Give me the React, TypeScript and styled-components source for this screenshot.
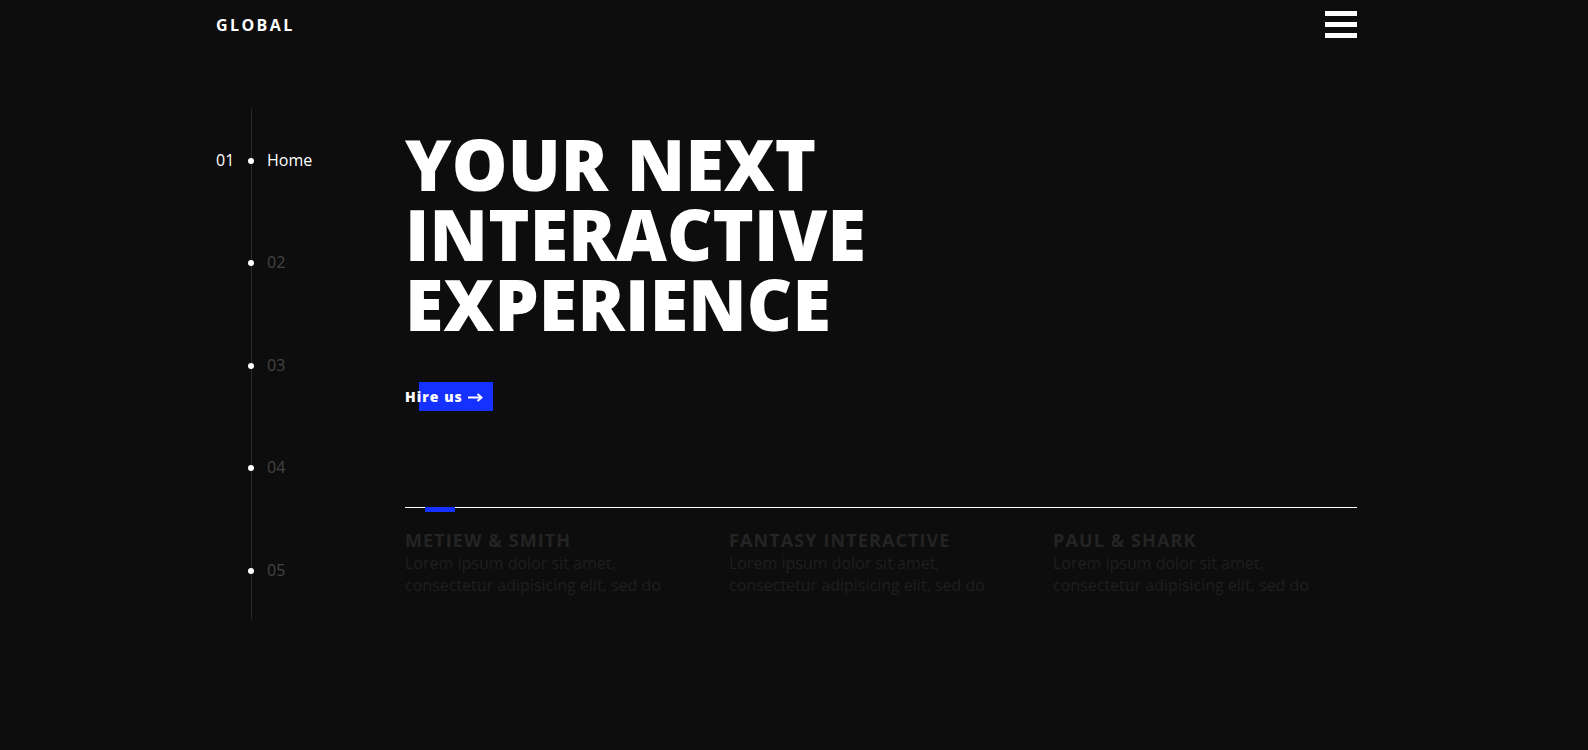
import React from "react";
import styled, { createGlobalStyle } from "styled-components";

const GlobalStyle = createGlobalStyle`
  html, body { margin: 0; padding: 0; background: #0d0d0d; }
  body { font-family: "Open Sans", "Liberation Sans", sans-serif; color: #fff; min-height: 750px; }
  * { box-sizing: border-box; }
`;

const Container = styled.div`
  width: 1141px;
  margin-left: 216px;
`;

const Header = styled.header`
  height: 49px;
  display: flex;
  align-items: center;
  justify-content: space-between;
`;

const Logo = styled.div`
  font-size: 16px;
  font-weight: 700;
  letter-spacing: 2.4px;
  line-height: 1;
  padding-top: 1px;
`;

const Burger = styled.button`
  width: 32px;
  padding: 0;
  border: 0;
  background: none;
  display: flex;
  flex-direction: column;
  gap: 6px;
  cursor: pointer;
`;

const Bar = styled.span`
  display: block;
  height: 5px;
  background: #fff;
`;

const Main = styled.main`
  display: flex;
  padding-top: 60px;
`;

const SideNav = styled.nav`
  width: 189px;
  flex: none;
  height: 510px;
  padding-top: 39px;
  display: flex;
  flex-direction: column;
  gap: 78.4px;
  background: linear-gradient(#2a2a2a, #2a2a2a) no-repeat 35px 0 / 1px 100%;
`;

const NavItem = styled.div`
  height: 24px;
  display: grid;
  grid-template-columns: 32px 6px 1fr;
  align-items: center;
  font-size: 16px;
  line-height: 24px;
`;

const Index = styled.span`
  color: #fff;
`;

const Dot = styled.span`
  width: 6px;
  height: 6px;
  margin-top: 2px;
  border-radius: 50%;
  background: #fff;
`;

const Label = styled.span<{ $active?: boolean }>`
  margin-left: 13px;
  color: ${(p) => (p.$active ? "#fff" : "#444")};
`;

const Content = styled.section`
  flex: 1;
  padding-top: 20px;
`;

const Title = styled.h1`
  margin: 0;
  font-size: 70px;
  line-height: 70px;
  font-weight: 800;
  letter-spacing: 0.2px;
  color: #fff;
`;

const HireButton = styled.a`
  position: relative;
  display: inline-flex;
  align-items: center;
  gap: 5px;
  margin-top: 43px;
  height: 29px;
  padding-right: 10px;
  font-size: 14px;
  font-weight: 800;
  letter-spacing: 1px;
  color: #fff;
  text-decoration: none;
  isolation: isolate;
  &::before {
    content: "";
    position: absolute;
    left: 14px;
    right: 0;
    top: 0;
    bottom: 0;
    background: #1431ff;
    z-index: -1;
  }
`;

const Arrow = styled.svg`
  width: 15px;
  height: 9px;
  margin-top: 1px;
`;

const Track = styled.div`
  margin-top: 96px;
  height: 5px;
  background: linear-gradient(#fff, #fff) no-repeat 0 0 / 100% 1px;
`;

const Indicator = styled.div`
  width: 30px;
  height: 5px;
  margin-left: 20px;
  background: #1431ff;
`;

const Clients = styled.div`
  display: grid;
  grid-template-columns: repeat(3, 1fr);
  gap: 20px;
  margin-top: 16px;
`;

const Client = styled.div``;

const ClientName = styled.h3`
  margin: 0;
  font-size: 18px;
  line-height: 24px;
  font-weight: 700;
  letter-spacing: 1.1px;
  color: #242424;
`;

const ClientText = styled.p`
  margin: 0;
  max-width: 290px;
  font-size: 16px;
  line-height: 22px;
  color: #1f1f1f;
`;

const navItems = ["01", "02", "03", "04", "05"];
const clients = ["METIEW & SMITH", "FANTASY INTERACTIVE", "PAUL & SHARK"];

export default function App() {
  return (
    <>
      <GlobalStyle />
      <Container>
        <Header>
          <Logo>GLOBAL</Logo>
          <Burger aria-label="Menu">
            <Bar />
            <Bar />
            <Bar />
          </Burger>
        </Header>
        <Main>
          <SideNav>
            {navItems.map((n, i) => (
              <NavItem key={n}>
                <Index>{i === 0 ? n : ""}</Index>
                <Dot />
                <Label $active={i === 0}>{i === 0 ? "Home" : n}</Label>
              </NavItem>
            ))}
          </SideNav>
          <Content>
            <Title>
              YOUR NEXT
              <br />
              INTERACTIVE
              <br />
              EXPERIENCE
            </Title>
            <HireButton href="#">
              Hire us
              <Arrow viewBox="0 0 15 9" fill="none">
                <path d="M0 4.5H13" stroke="#fff" strokeWidth="2" />
                <path d="M9.5 1L13.5 4.5L9.5 8" stroke="#fff" strokeWidth="2" />
              </Arrow>
            </HireButton>
            <Track>
              <Indicator />
            </Track>
            <Clients>
              {clients.map((c) => (
                <Client key={c}>
                  <ClientName>{c}</ClientName>
                  <ClientText>
                    Lorem ipsum dolor sit amet, consectetur adipisicing elit, sed do
                  </ClientText>
                </Client>
              ))}
            </Clients>
          </Content>
        </Main>
      </Container>
    </>
  );
}
